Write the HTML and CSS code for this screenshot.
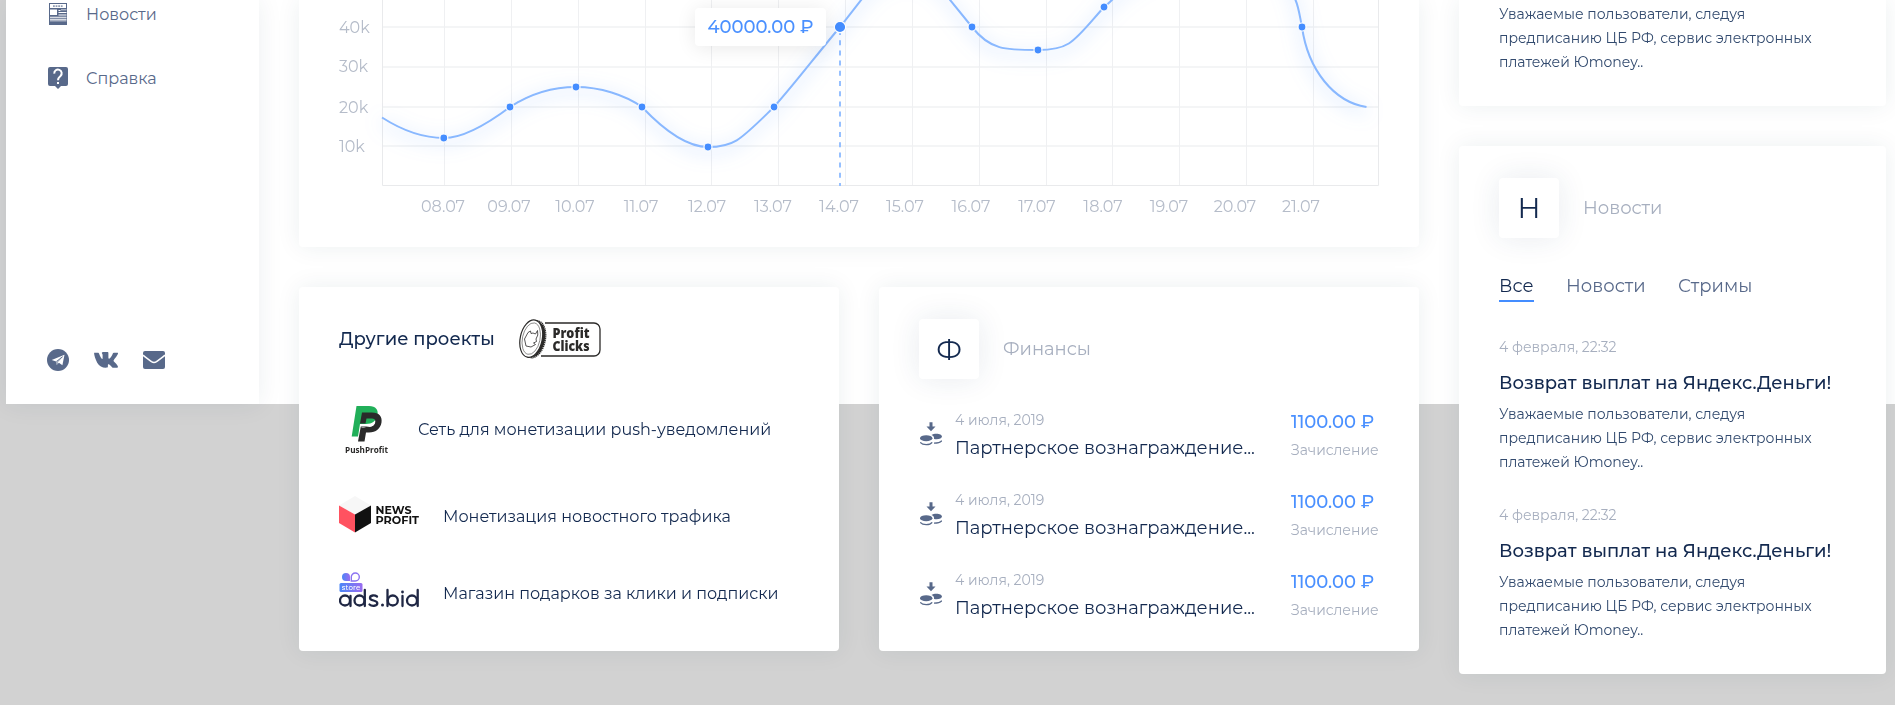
FILE: index.html
```html
<!DOCTYPE html>
<html lang="ru">
<head>
<meta charset="utf-8">
<title>Кабинет</title>
<link rel="stylesheet" href="styles.css">
</head>
<body>
<svg class="defs" width="0" height="0" aria-hidden="true">
  <symbol id="coins" viewBox="0 0 22 24">
    <path d="M9.500 .3h3v4.200h3L11 9.200 6.500 4.500h3z"/>
    <path d="M11.500 13.100c1.200-.8 3-1.300 5-1.300 3 0 5.500 1.200 5.500 2.700s-2.400 2.700-5.400 2.800c-.9 0-1.800 0-2.600-.2.500-1.400-.3-3-2.500-4z"/>
    <ellipse cx="6.200" cy="16.200" rx="6.200" ry="3"/>
    <path d="M.2 20.300c1.200 1.600 3.400 2.300 6 2.300s4.800-.7 6-2.300" fill="none" stroke="currentColor" stroke-width="1.300"/>
    <path d="M14 21.200c3.500 0 6.500-.8 7.800-2.500" fill="none" stroke="currentColor" stroke-width="1.300"/>
  </symbol>
</svg>
<div class="app">
  <aside class="sidebar">
    <nav class="menu">
      <a class="menu-item">
        <svg width="20" height="22" viewBox="0 0 20 22"><path fill="currentColor" d="M1 0h18v22H1z"/><path fill="#fff" d="M2 1h16v4H2zM2 6.500h7v5.500H2zM10.500 7h2v1h-2zM13 6.500h5.500v.7H13zM10.500 9h8v1h-8zM10.500 11.500h8v1h-8zM2 13.800h16.500v.9H2zM2 15.800h16.500v.9H2zM2 17.600h16.500v.7H2z"/><path fill="currentColor" d="M5 2.200h1.800v1.800H5zM7.600 2.200h1.800v1.800H7.600zM10.200 2.200h1.800v1.800h-1.800zM12.800 2.200h1.800v1.800h-1.800z" opacity=".65"/></svg>
        <span>Новости</span>
      </a>
      <a class="menu-item">
        <svg width="20" height="22" viewBox="0 0 20 22"><path fill="currentColor" d="M2 0h16a2 2 0 0 1 2 2v15a2 2 0 0 1-2 2h-5l-3 3-3-3H2a2 2 0 0 1-2-2V2a2 2 0 0 1 2-2z"/><path fill="none" stroke="#fff" stroke-width="2" d="M6.300 6.600A3.700 3.700 0 1 1 12.500 9C11 10.300 10 11 10 13.300"/><path fill="#fff" d="M9 15h2v2H9z"/></svg>
        <span>Справка</span>
      </a>
    </nav>
    <div class="social">
      <svg width="22" height="22" viewBox="0 0 22 22"><circle cx="11" cy="11" r="11" fill="currentColor"/><path fill="#fff" d="M4.700 11 17.500 5.800 15.400 16.200 11.900 13.700 9.700 16 9.200 12.600z"/><path fill="none" stroke="#58698a" stroke-width=".8" d="M9.300 12.500 15.500 7.700 10.200 13.200v2.200"/></svg>
      <svg width="24" height="16" viewBox="0 0 24 16"><path fill="currentColor" d="M.2.700h3.700c.7 0 .9.300 1.100.9 1 2.900 2.500 5.400 3.200 5.400.3 0 .4-.2.400-1V3c-.1-1.300-.8-1.400-.8-1.900C7.800.8 8.100 0 8.900 0h4.500c.8 0 1 .4 1 1.200v4.400c0 .8.200 1.100.5 1.100.4 0 .7-.3 1.500-1 1.400-1.600 2.300-4 2.300-4 .2-.6.600-1 1.200-1h3.300c1 0 .9.500.7 1.100-.4 1.500-3.500 5.500-4 6.100-.5.600-.6.900 0 1.600 1 1.100 3.700 3.400 4 4.900.2.900-.3 1.400-1.200 1.400h-3.300c-.9 0-1.200-.5-2.700-2.100-1.300-1.300-1.800-1.500-2.200-1.500-.4 0-.6.200-.6 1v1.400c0 .8-.3 1.200-2.300 1.200-3.300 0-6.400-1.800-8.400-5C1.500 7 .1 3.300.1 1.200z"/></svg>
      <svg width="22" height="18" viewBox="0 0 22 18"><rect width="22" height="18" rx="2" fill="currentColor"/><path d="M0 4.200c3 2.500 6 4.500 8.500 6.400 1.800 1.300 3.200 1.300 5 0C16 8.700 19 6.700 22 4.200" fill="none" stroke="#fff" stroke-width="1.500"/></svg>
    </div>
  </aside>

  <main class="main">
    <section class="card chart-card">
      <svg class="chart" width="1120" height="247" viewBox="299 0 1120 247">
        <g class="grid-h">
          <path d="M382 27H1378M382 67H1378M382 107H1378M382 146H1378"/>
        </g>
        <g class="grid-v">
          <path d="M444.500 0V185M511.500 0V185M578.500 0V185M645.500 0V185M711.500 0V185M778.500 0V185M845.500 0V185M912.500 0V185M979.500 0V185M1046.500 0V185M1112.500 0V185M1179.500 0V185M1246.500 0V185M1313.500 0V185"/>
          <path class="frame" d="M382.500 0V185.500H1378.500V0"/>
        </g>
        <g class="axis">
          <text x="339" y="33">40k</text>
          <text x="339" y="72">30k</text>
          <text x="339" y="113">20k</text>
          <text x="339" y="152">10k</text>
        </g>
        <g class="axis dates">
          <text x="443" y="212">08.07</text>
          <text x="509" y="212">09.07</text>
          <text x="575" y="212">10.07</text>
          <text x="641" y="212">11.07</text>
          <text x="707" y="212">12.07</text>
          <text x="773" y="212">13.07</text>
          <text x="839" y="212">14.07</text>
          <text x="905" y="212">15.07</text>
          <text x="971" y="212">16.07</text>
          <text x="1037" y="212">17.07</text>
          <text x="1103" y="212">18.07</text>
          <text x="1169" y="212">19.07</text>
          <text x="1235" y="212">20.07</text>
          <text x="1301" y="212">21.07</text>
        </g>
        <path class="marker" d="M840 33V186"/>
        <path class="curve" d="M382 117.500C400 129 422 138 444 138C465 138 490 122 510 107C530 94 553 87 576 87C600 87 625 95 642 107C660 126 685 147 708 147C735 147 741 139 774 107C797 81 818 53 840 27L862 -1C890 -34 925 -34 950 0L972 27C990 50 1005 50 1038 50C1071 50 1074 41 1104 7C1108 4 1110 2 1113 -1C1150 -40 1280 -80 1295.500 0C1299 8 1300 18 1302 27C1308 70 1334 102 1366.500 107"/>
        <g class="dots">
          <circle cx="443.800" cy="138" r="4"/><circle cx="510" cy="107" r="4"/><circle cx="576" cy="87" r="4"/><circle cx="642" cy="107" r="4"/><circle cx="708" cy="147" r="4"/><circle cx="774" cy="107" r="4"/><circle cx="972" cy="27" r="4"/><circle cx="1038" cy="50" r="4"/><circle cx="1104" cy="7" r="4"/><circle cx="1302" cy="27" r="4"/>
          <circle cx="840" cy="27" r="5.700"/>
        </g>
      </svg>
      <div class="tooltip">40000.00 ₽</div>
    </section>

    <div class="row">
      <section class="card projects">
        <header class="projects-head">
          <h2>Другие проекты</h2>
          <svg width="82" height="40" viewBox="0 0 82 40">
            <path d="M26 4H75a6 6 0 0 1 6 6V31a6 6 0 0 1-6 6H22" fill="none" stroke="#2b2a29" stroke-width="1.300"/>
            <g transform="rotate(12 14 20)">
              <ellipse cx="15.800" cy="20" rx="11.200" ry="19.300" fill="#2b2a29"/>
              <ellipse cx="16.800" cy="20" rx="10" ry="18.300" fill="none" stroke="#fff" stroke-width="2" stroke-dasharray=".7 1.300"/>
              <ellipse cx="12.200" cy="20" rx="11" ry="19" fill="#fff" stroke="#2b2a29" stroke-width="1.200"/>
              <ellipse cx="12.200" cy="20" rx="8.800" ry="16" fill="none" stroke="#2b2a29" stroke-width=".5"/>
            </g>
            <path d="M5.500 20 9 13.500 11.500 12 12 14.500 14 14 16.500 15 18.500 11.500 18.800 16 17 20 17.500 22.500 14.500 24 16.500 25.500 12 28 7 27z" fill="none" stroke="#2b2a29" stroke-width=".8" stroke-linejoin="round"/>
            <text class="logo-noto" x="33.500" y="18.800" font-size="13.500" textLength="37" lengthAdjust="spacingAndGlyphs">Profit</text>
            <text class="logo-noto" x="33.500" y="32" font-size="13.500" textLength="37" lengthAdjust="spacingAndGlyphs">Clicks</text>
          </svg>
        </header>
        <ul class="project-list">
          <li class="push">
            <svg width="55" height="54" viewBox="0 0 55 54">
              <path d="M17.500 4H30C37 4 39.500 8 38.500 13C37.500 19 33 22 27 22H21L19 34.500H12.700z" fill="#21af59"/>
              <path d="M23 10.500H33C40 10.500 43.500 14.500 42.500 20.500C41.500 26.500 37 30.500 30 30.500H27L25.500 39.500H19L21.800 24.500H31C34 24.500 36 22.500 36.300 20C36.600 17.500 35 16.500 33 16.500H27.500L26.500 21.500H21z" fill="#2a2a2a"/>
              <path d="M22.500 25.500C29.500 25.500 33.500 23.500 35.500 18.500C36.500 22 34 24.500 30.500 25H22.500z" fill="#fff"/>
              <text class="logo-noto thin" x="6" y="50.500" font-size="9" textLength="43" lengthAdjust="spacingAndGlyphs">PushProfit</text>
            </svg>
            <span>Сеть для монетизации push-уведомлений</span>
          </li>
          <li class="news">
            <svg width="80" height="40" viewBox="0 0 80 40">
              <path d="M16 0 32 9.500 16 18.500 0 9.500z" fill="#f7f7f7"/>
              <path d="M0 9.500 16 18.500V36.500L0 27z" fill="#ff5260"/>
              <path d="M32 9.500 16 18.500V36.500L32 27z" fill="#111"/>
              <text class="logo-news" x="36.500" y="17.700" textLength="36" lengthAdjust="spacingAndGlyphs">NEWS</text>
              <text class="logo-news" x="36.500" y="27.700" textLength="43.500" lengthAdjust="spacingAndGlyphs">PROFIT</text>
            </svg>
            <span>Монетизация новостного трафика</span>
          </li>
          <li class="ads">
            <svg width="80" height="36" viewBox="0 0 80 36">
              <defs><linearGradient id="ad" x1="0" x2="1"><stop offset="0" stop-color="#4a86f7"/><stop offset="1" stop-color="#9a6cf0"/></linearGradient></defs>
              <path d="M7 1a4 4 0 0 1 4 4v4H7a4 4 0 0 1 0-8z" fill="url(#ad)"/>
              <path d="M12.300 9V5a4 4 0 1 1 4 4z" fill="none" stroke="#8b73f1" stroke-width="1.400"/>
              <g fill="none" stroke="#1f2744" stroke-width="2.300" stroke-linecap="round">
                <circle cx="6" cy="28.500" r="5"/><path d="M11.500 24V34"/>
                <circle cx="20.500" cy="28.500" r="5"/><path d="M25.800 18V34"/>
                <path d="M38 24.500C36 23 31 22.800 31 26C31 29.200 38.300 27.800 38.300 31.200C38.300 34.500 32.500 34.300 30.500 32.500"/>
                <path d="M48.500 18V34"/><circle cx="53.800" cy="28.500" r="5"/>
                <path d="M63.500 24V34"/><circle cx="73" cy="28.500" r="5"/><path d="M78.700 18V34"/>
              </g>
              <circle cx="43.500" cy="33" r="1.500" fill="#1f2744"/><circle cx="63.500" cy="20" r="1.400" fill="#1f2744"/>
              <rect x=".5" y="11" width="23" height="9" rx="1.500" fill="url(#ad)"/>
              <text class="store" x="2.800" y="17.700" textLength="18.500">store</text>
            </svg>
            <span>Магазин подарков за клики и подписки</span>
          </li>
        </ul>
      </section>

      <section class="card finance">
        <header class="card-head"><div class="badge">Ф</div><span>Финансы</span></header>
        <ul class="ops">
          <li>
            <svg class="coins" width="22" height="24"><use href="#coins"/></svg>
            <div class="op"><div class="op-date">4 июля, 2019</div><div class="op-name">Партнерское вознаграждение...</div></div>
            <div class="sum"><div class="sum-val">1100.00 ₽</div><div class="sum-kind">Зачисление</div></div>
          </li>
          <li>
            <svg class="coins" width="22" height="24"><use href="#coins"/></svg>
            <div class="op"><div class="op-date">4 июля, 2019</div><div class="op-name">Партнерское вознаграждение...</div></div>
            <div class="sum"><div class="sum-val">1100.00 ₽</div><div class="sum-kind">Зачисление</div></div>
          </li>
          <li>
            <svg class="coins" width="22" height="24"><use href="#coins"/></svg>
            <div class="op"><div class="op-date">4 июля, 2019</div><div class="op-name">Партнерское вознаграждение...</div></div>
            <div class="sum"><div class="sum-val">1100.00 ₽</div><div class="sum-kind">Зачисление</div></div>
          </li>
        </ul>
      </section>
    </div>
  </main>

  <aside class="side">
    <section class="card notice">
      <p class="body">Уважаемые пользователи, следуя<br>предписанию ЦБ РФ, сервис электронных<br>платежей Юmoney..</p>
    </section>
    <section class="card news-card">
      <header class="card-head"><div class="badge">Н</div><span>Новости</span></header>
      <nav class="tabs"><a class="tab active">Все</a><a class="tab">Новости</a><a class="tab">Стримы</a></nav>
      <article class="item">
        <time>4 февраля, 22:32</time>
        <h3>Возврат выплат на Яндекс.Деньги!</h3>
        <p class="body">Уважаемые пользователи, следуя<br>предписанию ЦБ РФ, сервис электронных<br>платежей Юmoney..</p>
      </article>
      <article class="item">
        <time>4 февраля, 22:32</time>
        <h3>Возврат выплат на Яндекс.Деньги!</h3>
        <p class="body">Уважаемые пользователи, следуя<br>предписанию ЦБ РФ, сервис электронных<br>платежей Юmoney..</p>
      </article>
    </section>
  </aside>
</div>
</body>
</html>
```
FILE: styles.css
```css
* { box-sizing: border-box; margin: 0; padding: 0; }
html, body { height: 705px; overflow: hidden; }
body { background: #d2d2d2; font-family: Montserrat, Inter, "Noto Sans", sans-serif; font-size: 16px; color: #13294f; padding-left: 6px; }
ul { list-style: none; }
svg { display: block; flex: none; }
.defs { position: absolute; }

.app { display: flex; align-items: flex-start; gap: 40px; height: 404px; background: #fff; }
.card { background: #fff; border-radius: 4px; box-shadow: 0 0 24px rgba(30, 60, 80, .08); will-change: transform; }

.sidebar { width: 253px; height: 404px; flex: none; background: #fff; display: flex; flex-direction: column; justify-content: space-between; padding: 3px 0 33px 41px; color: #58698a; box-shadow: 0 0 24px rgba(30, 50, 80, .08); }
.menu { display: flex; flex-direction: column; gap: 42px; padding-left: 1px; }
.menu-item { display: flex; align-items: center; gap: 18px; height: 22px; }
.social { display: flex; align-items: center; gap: 25px; }

.main { width: 1120px; flex: none; display: flex; flex-direction: column; gap: 40px; }
.chart-card { position: relative; height: 247px; border-radius: 0 0 4px 4px; }
.grid-h path { stroke: #f4f5f6; stroke-width: 2; }
.grid-v path { fill: none; stroke: #eff0f2; stroke-width: 1; }
.grid-v .frame { stroke: #e9eaec; }
.axis text { font-size: 16px; fill: #b5bcc9; }
.dates text { text-anchor: middle; }
.marker { stroke: #96c0ff; stroke-width: 2; stroke-dasharray: 5 5.200; stroke-dashoffset: 3; }
.curve { fill: none; stroke: #89b8ff; stroke-width: 2; filter: drop-shadow(0 4px 9px rgba(68, 140, 255, .6)); }
.dots circle { fill: #448dff; stroke: #fff; stroke-width: 1.200; }
.tooltip { position: absolute; left: 396px; top: 8px; width: 131px; height: 38px; line-height: 38px; text-align: center; background: #fff; border-radius: 4px; box-shadow: 0 2px 20px rgba(0, 0, 0, .09); color: #4a90ff; font-size: 18px; font-weight: 500; }

.row { display: flex; gap: 40px; }
.row .card { width: 540px; height: 364px; }
.projects { padding: 32px 40px; }
.projects-head { display: flex; align-items: center; gap: 24px; height: 40px; }
h2 { font-size: 18px; font-weight: 500; white-space: nowrap; }
.project-list { padding-top: 43px; }
.project-list li { display: flex; align-items: center; gap: 24px; white-space: nowrap; }
.push { height: 54px; }
.news { height: 38px; margin-top: 41px; }
.ads { height: 36px; margin-top: 37px; }
.ads span { padding-top: 7px; }
.logo-noto { font-family: "Open Sans", "Noto Sans", sans-serif; font-weight: 800; fill: #2b2a29; }
.logo-noto.thin { font-weight: 700; }
.logo-news { font-size: 11px; font-weight: 700; fill: #111; }
.store { font-size: 7px; font-weight: 500; fill: #fff; }

.card-head { display: flex; align-items: center; gap: 24px; height: 60px; font-size: 18px; color: #a7afbf; }
.badge { width: 60px; height: 60px; line-height: 60px; border-radius: 4px; text-align: center; font-size: 28px; color: #13294f; background: #fff; box-shadow: 0 0 30px rgba(30, 60, 100, .1); }
.finance { padding: 32px 40px; }
.ops { padding-top: 31px; }
.ops li { display: flex; height: 80px; }
.coins { color: #58698a; fill: currentColor; margin: 12px 13px 0 1px; }
.op { flex: 1; white-space: nowrap; margin-top: -1px; }
.op-date { font-size: 14px; line-height: 22px; color: #a7afbf; }
.op-name { font-size: 18px; line-height: 24px; margin-top: 5px; }
.sum { width: 88px; white-space: nowrap; }
.sum-val { font-size: 18px; font-weight: 500; line-height: 24px; color: #4a90ff; }
.sum-kind { font-size: 14px; line-height: 20px; margin-top: 6px; color: #a7afbf; }

.side { width: 427px; flex: none; display: flex; flex-direction: column; gap: 40px; }
.notice { height: 106px; padding: 2px 40px; border-radius: 0 0 4px 4px; }
.body { font-size: 14px; line-height: 24px; color: #324a6e; white-space: nowrap; }
.news-card { height: 528px; padding: 32px 40px; }
.tabs { display: flex; gap: 32.5px; margin-top: 36px; font-size: 18px; line-height: 24px; color: #58698a; }
.tab { height: 28px; }
.tab.active { color: #13294f; border-bottom: 2px solid #448dff; }
.item { padding-top: 35px; height: 168px; }
.item time { display: block; font-size: 14px; line-height: 20px; color: #a7afbf; white-space: nowrap; }
h3 { font-size: 18px; font-weight: 500; line-height: 24px; margin: 14px 0 7px; white-space: nowrap; }
```
